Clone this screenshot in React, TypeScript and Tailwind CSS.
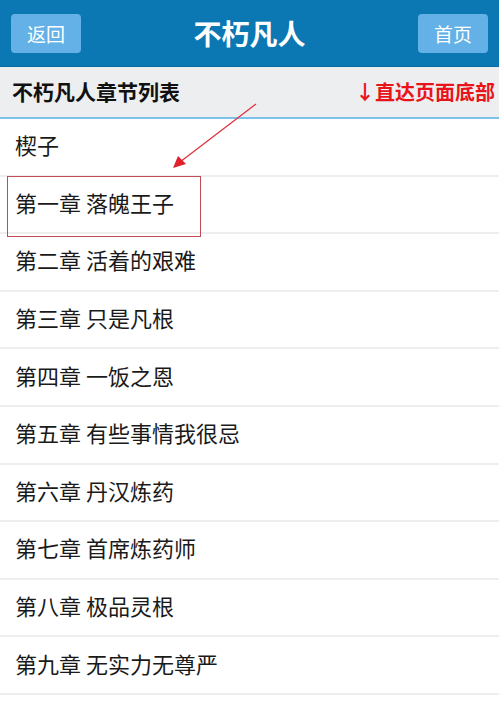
const chapters = [
  "楔子",
  "第一章 落魄王子",
  "第二章 活着的艰难",
  "第三章 只是凡根",
  "第四章 一饭之恩",
  "第五章 有些事情我很忌",
  "第六章 丹汉炼药",
  "第七章 首席炼药师",
  "第八章 极品灵根",
  "第九章 无实力无尊严",
];

const font = { fontFamily: '"Noto Sans CJK SC", "Noto Sans", sans-serif' };

export default function App() {
  return (
    <div className="relative w-[499px] h-[703px] overflow-hidden bg-white" style={font}>
      {/* top bar */}
      <div className="h-[67px] bg-[#0b78b4] border-b border-[#0a6aa0] flex items-center justify-between px-[11px]">
        <button className="w-[70px] h-[39px] rounded-[4px] bg-[#63b1e6] text-white text-[19px] leading-none">
          返回
        </button>
        <h1 className="text-white text-[28px] font-bold leading-none">不朽凡人</h1>
        <button className="w-[70px] h-[39px] rounded-[4px] bg-[#63b1e6] text-white text-[19px] leading-none">
          首页
        </button>
      </div>

      {/* sub header */}
      <div className="h-[52px] bg-[#eceef0] border-b-2 border-[#7cc2ea] flex items-center justify-between pl-[12px] pr-[4px]">
        <span className="text-[21px] font-bold text-[#111]">不朽凡人章节列表</span>
        <span className="text-[20px] font-bold text-[#e8141a]">↓直达页面底部</span>
      </div>

      {/* chapter list */}
      <ul>
        {chapters.map((c) => (
          <li
            key={c}
            className="h-[57.6px] border-b-2 border-[#eeeeee] flex items-center pl-[15px] pb-[4px] text-[22px] text-[#1a1a1a] whitespace-pre"
          >
            {c}
          </li>
        ))}
      </ul>

      {/* annotation */}
      <div className="absolute left-[7px] top-[176px] w-[194px] h-[61px] border border-[#c04a55]" />
      <svg className="absolute left-0 top-0" width="499" height="703" viewBox="0 0 499 703">
        <line x1="256" y1="104" x2="180" y2="162" stroke="#e0303a" strokeWidth="1.3" />
        <polygon points="173,168 178,156 186,164" fill="#e0202a" />
      </svg>
    </div>
  );
}
